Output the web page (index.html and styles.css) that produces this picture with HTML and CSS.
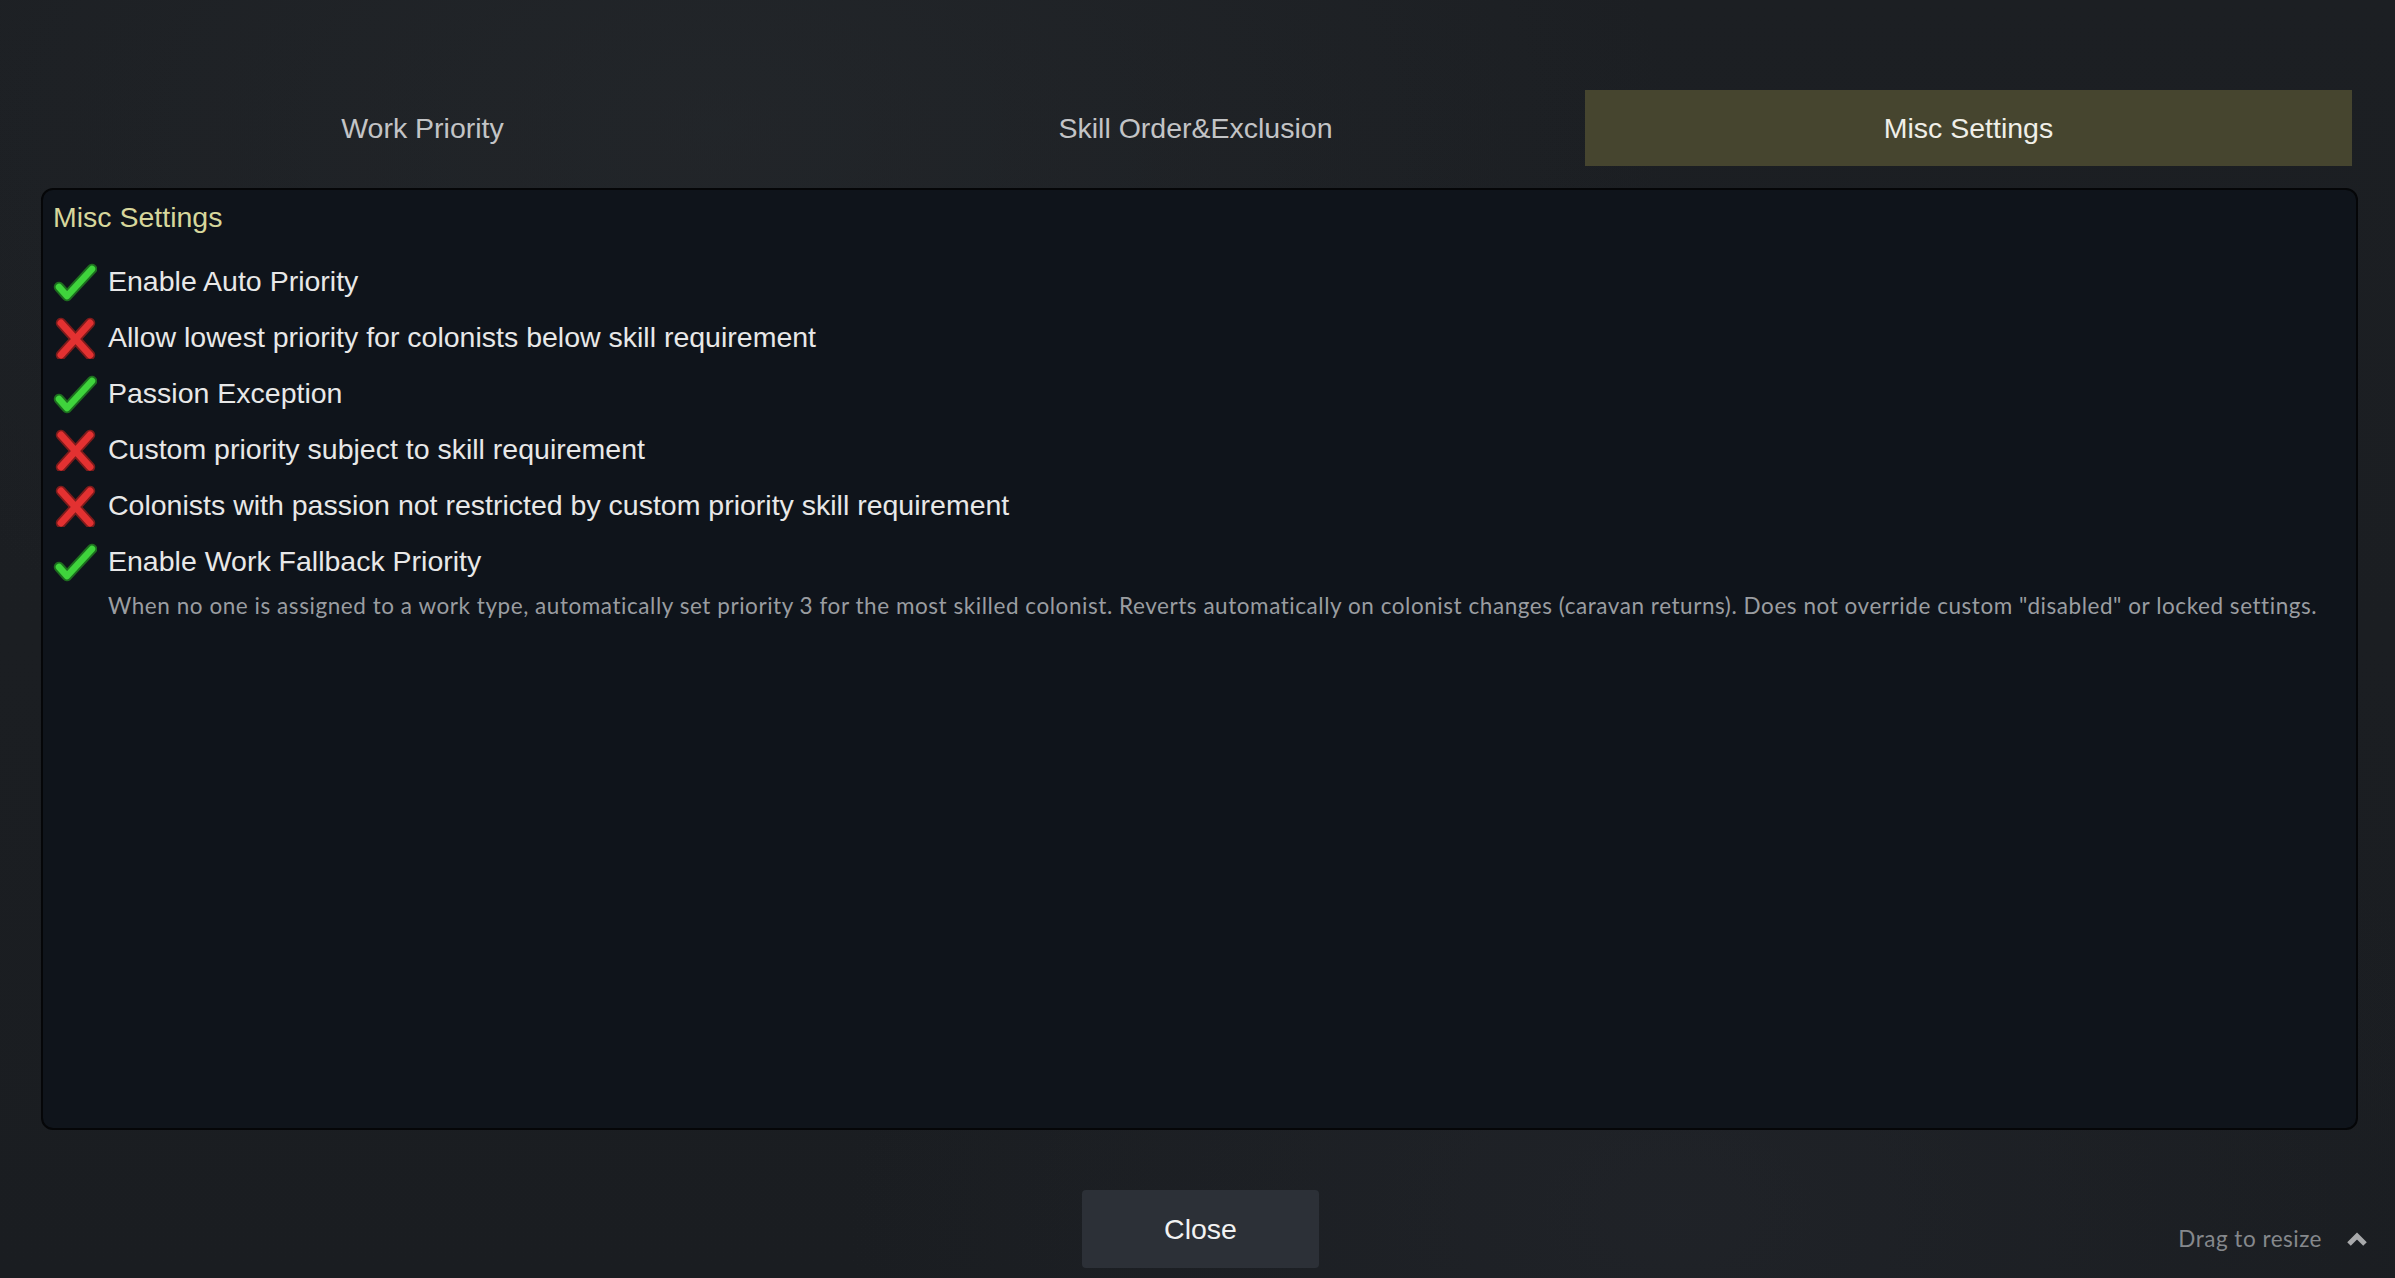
FILE: index.html
```html
<!DOCTYPE html>
<html lang="en">
<head>
<meta charset="utf-8">
<title>Misc Settings</title>
<link rel="stylesheet" href="styles.css">
</head>
<body>
<div class="window">
  <nav class="tabs">
    <div class="tab">Work Priority</div>
    <div class="tab">Skill Order&amp;Exclusion</div>
    <div class="tab active">Misc Settings</div>
  </nav>

  <section class="panel">
    <h2 class="panel-title">Misc Settings</h2>
    <ul class="options">
      <li class="option">
        <svg class="icon" viewBox="0 0 44 44"><polyline class="chk-o" points="6,28 14,37 39,10"/><polyline class="chk-i" points="6,28 14,37 39,10"/></svg>
        <span>Enable Auto Priority</span>
      </li>
      <li class="option">
        <svg class="icon" viewBox="0 0 44 44"><path class="x-o" d="M8 8 L37 40 M37 8 L8 40"/><path class="x-i" d="M8 8 L37 40 M37 8 L8 40"/></svg>
        <span>Allow lowest priority for colonists below skill requirement</span>
      </li>
      <li class="option">
        <svg class="icon" viewBox="0 0 44 44"><polyline class="chk-o" points="6,28 14,37 39,10"/><polyline class="chk-i" points="6,28 14,37 39,10"/></svg>
        <span>Passion Exception</span>
      </li>
      <li class="option">
        <svg class="icon" viewBox="0 0 44 44"><path class="x-o" d="M8 8 L37 40 M37 8 L8 40"/><path class="x-i" d="M8 8 L37 40 M37 8 L8 40"/></svg>
        <span>Custom priority subject to skill requirement</span>
      </li>
      <li class="option">
        <svg class="icon" viewBox="0 0 44 44"><path class="x-o" d="M8 8 L37 40 M37 8 L8 40"/><path class="x-i" d="M8 8 L37 40 M37 8 L8 40"/></svg>
        <span>Colonists with passion not restricted by custom priority skill requirement</span>
      </li>
      <li class="option">
        <svg class="icon" viewBox="0 0 44 44"><polyline class="chk-o" points="6,28 14,37 39,10"/><polyline class="chk-i" points="6,28 14,37 39,10"/></svg>
        <span>Enable Work Fallback Priority</span>
      </li>
    </ul>
    <p class="desc">When no one is assigned to a work type, automatically set priority 3 for the most skilled colonist. Reverts automatically on colonist changes (caravan returns). Does not override custom "disabled" or locked settings.</p>
  </section>

  <footer class="footer">
    <button class="close-btn">Close</button>
    <div class="resize">
      <span>Drag to resize</span>
      <svg class="resize-icon" viewBox="0 0 22 16"><path d="M3 13 L11 5 L19 13" /></svg>
    </div>
  </footer>
</div>
</body>
</html>
```

FILE: styles.css
```css
html, body {
  margin: 0;
  padding: 0;
}

body {
  width: 2395px;
  height: 1278px;
  overflow: hidden;
  background-color: #1b1e22;
  background-image:
    radial-gradient(ellipse at 30% 10%, rgba(40, 44, 48, 0.5), transparent 40%),
    radial-gradient(ellipse at 70% 95%, rgba(35, 38, 44, 0.6), transparent 35%),
    linear-gradient(180deg, #1c1f23 0%, #1a1d21 100%);
  font-family: "Liberation Sans", Arial, sans-serif;
  color: #e6e6e6;
}

.window {
  display: flex;
  flex-direction: column;
  padding: 90px 37px 0 39px;
  height: 1278px;
  box-sizing: border-box;
}

.tabs {
  display: grid;
  grid-template-columns: repeat(3, 1fr);
  gap: 6px;
  height: 76px;
  margin-right: 6px;
}

.tab {
  display: flex;
  align-items: center;
  justify-content: center;
  font-size: 28.5px;
  color: #c3c4c6;
}

.tab.active {
  background: #46452f;
  color: #f0efe8;
}

.panel {
  margin: 22px 0 0 2px;
  height: 942px;
  box-sizing: border-box;
  background: #0f141b;
  border: 2px solid #050608;
  border-radius: 12px;
  padding: 10px 12px 0 10px;
}

.panel-title {
  margin: 0;
  font-size: 28.5px;
  font-weight: normal;
  line-height: 34px;
  color: #d7d79c;
}

.options {
  list-style: none;
  margin: 19px 0 0 0;
  padding: 0;
}

.option {
  display: flex;
  align-items: center;
  height: 56px;
  font-size: 28.5px;
  color: #e8e8e8;
}

.icon {
  width: 44px;
  height: 44px;
  flex: none;
  margin-right: 11px;
}

.chk-o, .chk-i, .x-o, .x-i {
  fill: none;
  stroke-linecap: round;
  stroke-linejoin: round;
}

.chk-o { stroke: #1d6e1f; stroke-width: 10.5; }
.chk-i { stroke: #3fd43c; stroke-width: 6.5; }
.x-o { stroke: #7d1b1b; stroke-width: 10.5; }
.x-i { stroke: #e33131; stroke-width: 7; }

.desc {
  margin: 0 0 0 55px;
  font-family: Lato, "Open Sans", sans-serif;
  font-size: 22.5px;
  letter-spacing: 0.55px;
  line-height: 34px;
  color: #9a9da1;
  white-space: nowrap;
}

.footer {
  position: relative;
  display: flex;
  justify-content: center;
  padding-top: 60px;
}

.close-btn {
  width: 237px;
  height: 78px;
  border: none;
  border-radius: 4px;
  background: #2c3037;
  color: #f2f2f2;
  font-family: "Liberation Sans", Arial, sans-serif;
  font-size: 28.5px;
  margin-left: 4px;
}

.resize {
  position: absolute;
  right: -10px;
  top: 95px;
  display: flex;
  align-items: center;
  gap: 24px;
  font-family: Lato, "Open Sans", sans-serif;
  font-size: 22.5px;
  letter-spacing: 0.5px;
  color: #85888c;
}

.resize-icon {
  width: 22px;
  height: 16px;
}

.resize-icon path {
  fill: none;
  stroke: #a8a9ab;
  stroke-width: 5;
  stroke-linecap: butt;
  stroke-linejoin: miter;
}
```
